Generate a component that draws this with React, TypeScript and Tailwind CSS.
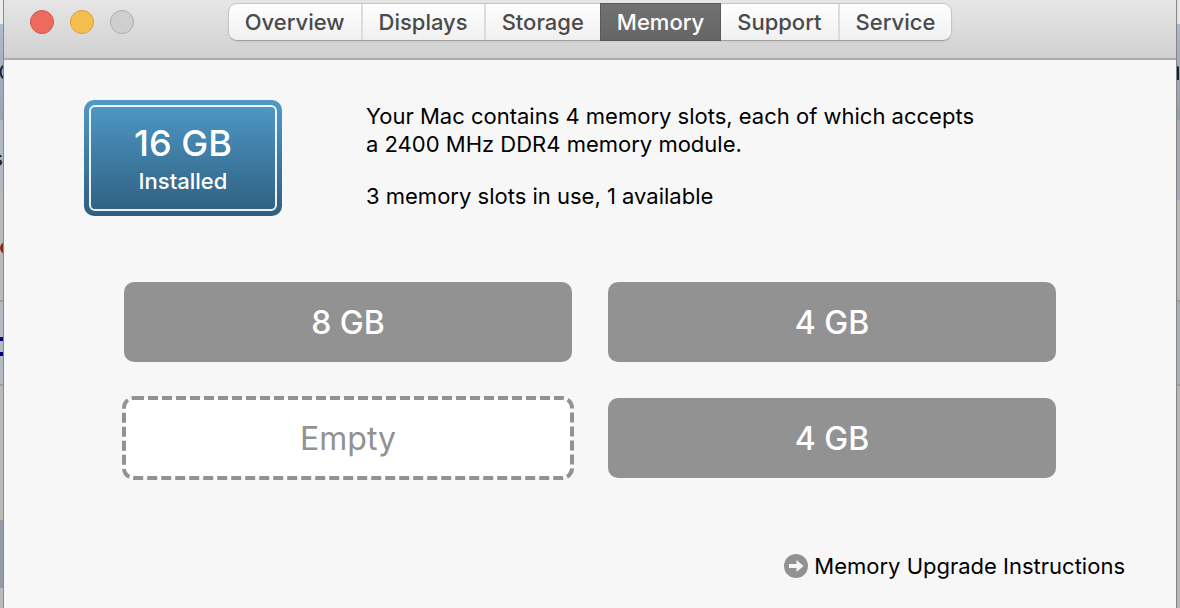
import clsx from 'clsx'

const tabs = ['Overview', 'Displays', 'Storage', 'Memory', 'Support', 'Service']

const slots = [
  { id: 1, size: '8 GB' },
  { id: 2, size: '4 GB' },
  { id: 3, size: null },
  { id: 4, size: '4 GB' },
]

function TrafficLights() {
  return (
    <div className="flex gap-4 pt-[10px]">
      <button
        aria-label="Close"
        className="size-6 rounded-full border border-[#d9534a] bg-[#ec6a5e]"
      />
      <button
        aria-label="Minimize"
        className="size-6 rounded-full border border-[#d9a03c] bg-[#f5bf4f]"
      />
      <button
        aria-label="Zoom"
        disabled
        className="size-6 rounded-full border border-[#aeaeae] bg-[#cfcfcf]"
      />
    </div>
  )
}

function TabBar() {
  return (
    <nav className="mt-[3px] flex h-[38px] rounded-[9px] border border-[#c4c4c4] border-b-[#a0a0a0] bg-linear-to-b from-white to-[#f0f0f0] shadow-xs">
      {tabs.map((tab, i) => {
        const active = tab === 'Memory'
        return (
          <button
            key={tab}
            className={clsx(
              'px-4 text-[22px] leading-8 font-medium',
              active
                ? '-my-px border border-[#5a5a5a] bg-linear-to-b from-[#717171] to-[#666666] text-white'
                : 'text-[#4a4a4a]',
              !active && i > 0 && tab !== 'Support' && 'border-l-2 border-[#dcdcdc]',
            )}
          >
            {tab}
          </button>
        )
      })}
    </nav>
  )
}

function Slot({ size }: { size: string | null }) {
  if (!size) {
    return (
      <div className="relative flex h-20 items-center justify-center pt-[2px] text-[32px] text-[#929292]">
        <svg className="absolute -inset-[2px] h-[84px] w-[calc(100%+4px)] overflow-visible">
          <rect
            x="2"
            y="2"
            rx="10"
            className="h-20 w-[calc(100%-4px)]"
            fill="#fff"
            stroke="#929292"
            strokeWidth="4"
            strokeDasharray="10 4"
          />
        </svg>
        <span className="relative">Empty</span>
      </div>
    )
  }
  return (
    <div className="flex h-20 items-center justify-center rounded-[10px] bg-[#929292] pt-[2px] text-[32px] font-medium text-white">
      {size}
    </div>
  )
}

function LeftEdge() {
  return (
    <div className="flex w-1 shrink-0 flex-col overflow-hidden border-r border-[#8a8a8a] bg-[#bcbab7]">
      <div className="h-6 bg-[#ececec]" />
      <div className="flex h-24 flex-col items-end justify-center bg-linear-to-b from-[#b0bccd] to-[#98a4b2] text-[22px] leading-6 text-[#14213d]">
        <span className="-mr-3">O</span>
      </div>
      <div className="flex h-[76px] flex-col items-end justify-center bg-[#b3b9be] text-[22px] leading-6 text-[#222]">
        <span>s</span>
      </div>
      <div className="h-[104px] pt-[46px]">
        <div className="h-3 w-4 rounded-full bg-[#8a2a1c]" />
      </div>
      <div className="flex h-[86px] flex-col border-y-2 border-[#9a9ea8] bg-[#b4babf] pt-[35px]">
        <div className="h-[19px] border-y-4 border-[#000078]" />
      </div>
      <div className="h-[134px]" />
      <div className="h-[68px] bg-[#959ba5]" />
    </div>
  )
}

function RightEdge() {
  return (
    <div className="flex w-1 shrink-0 flex-col overflow-hidden border-l border-[#858585] bg-[#b8b8b8]">
      <div className="h-6 bg-[#e2e2e2]" />
      <div className="h-24 bg-linear-to-b from-[#acb9cd] to-[#949fac] pt-[42px]">
        <div className="h-[14px] w-[2px] rounded-tr-xs bg-[#10203a]" />
      </div>
      <div className="h-20 bg-[#a8abb6]" />
      <div className="h-[100px] bg-[#b9b9b9]" />
      <div className="h-[86px] border-y-2 border-[#9a9ea8] bg-[#abb0b4]" />
    </div>
  )
}

export default function App() {
  return (
    <div className="flex min-h-screen font-['Inter','Liberation_Sans',sans-serif]">
      <LeftEdge />
      <div className="flex min-w-0 flex-1 flex-col bg-[#f7f7f7]">
        <header className="grid h-[60px] grid-cols-[1fr_auto_1fr] items-start border-b-2 border-[#adadad] bg-linear-to-b from-[#e6e6e6] to-[#d0d0d0] px-[26px]">
          <TrafficLights />
          <TabBar />
        </header>
        <main className="flex flex-1 flex-col px-20 pt-10">
          <section className="flex items-start gap-[84px]">
            <div className="h-[116px] w-[198px] shrink-0 rounded-[10px] bg-linear-to-b from-[#4f9aca] to-[#2f5f7e] p-[5px] text-center font-medium text-white">
              <div className="flex h-full flex-col justify-center rounded-md border-2 border-white/90 pt-[6px]">
                <p className="text-4xl">16 GB</p>
                <p className="text-[22px] leading-9">Installed</p>
              </div>
            </div>
            <div className="pt-[2px] text-[22px] leading-7 text-black">
              <p className="max-w-[620px]">
                Your Mac contains 4 memory slots, each of which accepts a 2400
                MHz DDR4 memory module.
              </p>
              <p className="mt-6">3 memory slots in use, 1 available</p>
            </div>
          </section>
          <section className="mx-10 mt-[66px] grid grid-cols-2 gap-9">
            {slots.map((slot) => (
              <Slot key={slot.id} size={slot.size} />
            ))}
          </section>
        </main>
        <footer className="flex justify-end px-[51px] pb-7">
          <a
            href="#"
            className="flex items-center gap-[6px] text-[22px] leading-7 text-black"
          >
            <svg viewBox="0 0 24 24" className="size-6">
              <circle cx="12" cy="12" r="12" fill="#929292" />
              <path d="M5 10h7.500V6l7 6-7 6v-4H5z" fill="#f7f7f7" />
            </svg>
            Memory Upgrade Instructions
          </a>
        </footer>
      </div>
      <RightEdge />
    </div>
  )
}
